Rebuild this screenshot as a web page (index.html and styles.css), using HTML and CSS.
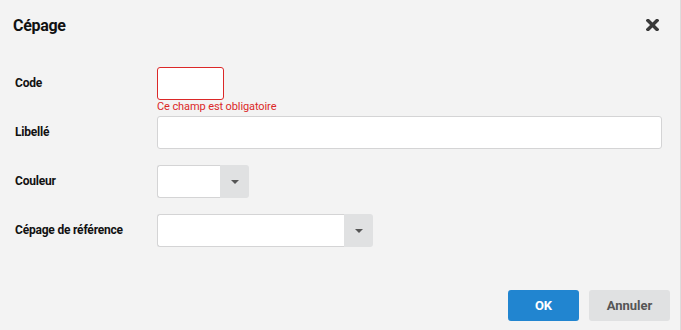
FILE: index.html
```html
<!DOCTYPE html>
<html lang="fr">
<head>
  <meta charset="UTF-8" />
  <title>Cépage</title>
  <link rel="stylesheet" href="styles.css">
</head>
<body>
  <div class="dialog">
    <div class="header">
      <h2>Cépage</h2>
      <button class="close" title="Fermer">
        <svg width="13" height="12" viewBox="0 0 13 12">
          <path d="M2 1.5 L11 10.5 M11 1.5 L2 10.5" stroke="#3a3a3a" stroke-width="3.4" stroke-linecap="square" />
        </svg>
      </button>
    </div>

    <form class="form">
      <div class="row row-error">
        <label>Code</label>
        <div class="field">
          <input type="text" class="input input-code invalid">
          <div class="error">Ce champ est obligatoire</div>
        </div>
      </div>

      <div class="row">
        <label>Libellé</label>
        <div class="field">
          <input type="text" class="input input-full">
        </div>
      </div>

      <div class="row">
        <label>Couleur</label>
        <div class="field">
          <div class="select select-small">
            <div class="select-value"></div>
            <div class="select-btn"><span class="caret"></span></div>
          </div>
        </div>
      </div>

      <div class="row">
        <label>Cépage de référence</label>
        <div class="field">
          <div class="select select-wide">
            <div class="select-value"></div>
            <div class="select-btn"><span class="caret"></span></div>
          </div>
        </div>
      </div>
    </form>

    <div class="actions">
      <button class="btn btn-ok">OK</button>
      <button class="btn btn-cancel">Annuler</button>
    </div>
  </div>
</body>
</html>
```

FILE: styles.css
```css
* {
  box-sizing: border-box;
}
body {
  margin: 0;
  background: #f3f3f3;
  font-family: Roboto, 'Liberation Sans', sans-serif;
  color: #111;
}
.dialog {
  width: 681px;
  height: 330px;
  border-right: 1px solid #dcdcdc;
  background: #f3f3f3;
  display: flex;
  flex-direction: column;
}
.header {
  display: flex;
  justify-content: space-between;
  align-items: center;
  height: 50px;
  padding: 0 21px 0 13px;
}
h2 {
  margin: 0;
  font-size: 16px;
  font-weight: 700;
  letter-spacing: -0.3px;
}
.close {
  border: none;
  background: none;
  padding: 0;
  display: flex;
  cursor: pointer;
}
.form {
  padding: 17px 0 0 15px;
}
.row {
  display: flex;
  align-items: flex-start;
  margin-bottom: 16px;
}
.row-error {
  margin-bottom: 2px;
}
.row label {
  width: 142px;
  flex-shrink: 0;
  font-size: 12px;
  font-weight: 700;
  line-height: 33px;
  letter-spacing: -0.2px;
}
.field {
  flex: 1;
}
.input {
  display: block;
  height: 33px;
  background: #fff;
  border: 1px solid #d4d4d5;
  border-radius: 3px;
  outline: none;
  font: inherit;
}
.input-code {
  width: 67px;
}
.input-full {
  width: 505px;
}
.invalid {
  border-color: #db2828;
}
.error {
  color: #db2828;
  font-size: 11px;
  line-height: 14px;
  letter-spacing: -0.1px;
}
.select {
  display: flex;
  height: 33px;
}
.select-small {
  width: 92px;
}
.select-wide {
  width: 216px;
}
.select-value {
  flex: 1;
  background: #fff;
  border: 1px solid #d4d4d5;
  border-right: none;
  border-radius: 3px 0 0 3px;
}
.select-btn {
  width: 29px;
  background: #e0e1e2;
  border-radius: 0 3px 3px 0;
  display: flex;
  justify-content: center;
  align-items: center;
}
.caret {
  width: 0;
  height: 0;
  border-left: 4px solid transparent;
  border-right: 4px solid transparent;
  border-top: 4px solid #555;
}
.actions {
  margin-top: auto;
  display: flex;
  justify-content: flex-end;
  gap: 10px;
  padding: 0 10px 9px 0;
}
.btn {
  height: 31px;
  border: none;
  border-radius: 3px;
  font-family: Roboto, 'Liberation Sans', sans-serif;
  font-size: 13px;
  font-weight: 700;
  cursor: pointer;
}
.btn-ok {
  width: 71px;
  background: #2185d0;
  color: #fff;
}
.btn-cancel {
  width: 81px;
  background: #e0e1e2;
  color: #555;
}
```
